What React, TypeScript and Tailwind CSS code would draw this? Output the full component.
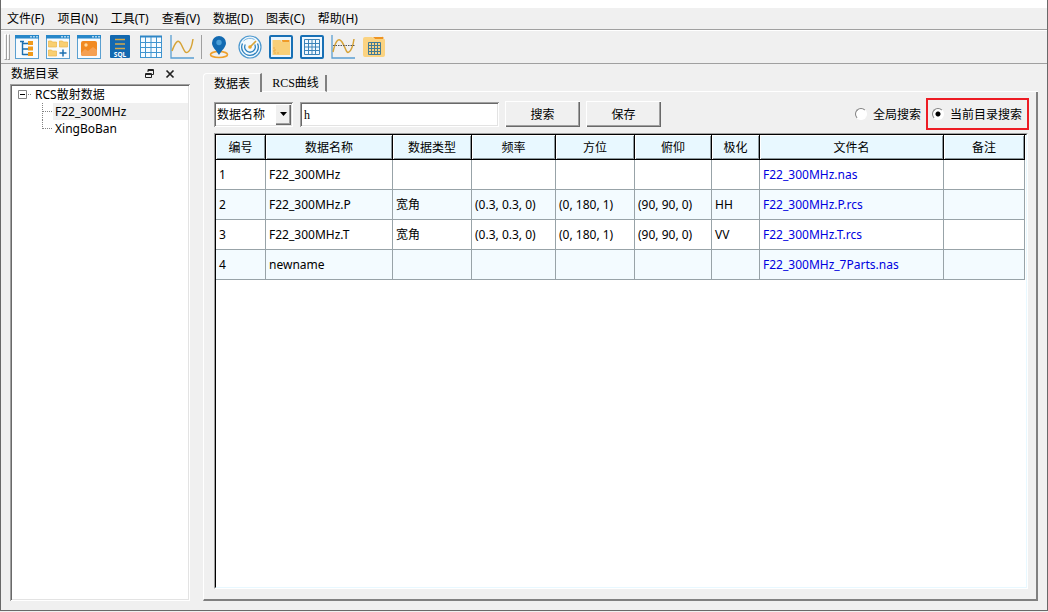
import { useState } from "react";
import type { ReactNode } from "react";

const sunken =
  "shadow-[inset_1px_1px_#a0a0a0,inset_-1px_-1px_#ffffff,inset_2px_2px_#696969,inset_-2px_-2px_#e3e3e3]";
const raised =
  "shadow-[inset_1px_1px_#ffffff,inset_-1px_-1px_#696969,inset_-2px_-2px_#a0a0a0]";
const bitmapFont = "font-['Liberation_Serif','Noto_Sans_CJK_SC',serif]";

const menus = ["文件(F)", "项目(N)", "工具(T)", "查看(V)", "数据(D)", "图表(C)", "帮助(H)"];

const columns = [
  { label: "编号", width: "w-[50px]" },
  { label: "数据名称", width: "w-[127px]" },
  { label: "数据类型", width: "w-[79px]" },
  { label: "频率", width: "w-[84px]" },
  { label: "方位", width: "w-[79px]" },
  { label: "俯仰", width: "w-[77px]" },
  { label: "极化", width: "w-[48px]" },
  { label: "文件名", width: "w-auto" },
  { label: "备注", width: "w-[81px]" },
];

const rows = [
  ["1", "F22_300MHz", "", "", "", "", "", "F22_300MHz.nas", ""],
  ["2", "F22_300MHz.P", "宽角", "(0.3, 0.3, 0)", "(0, 180, 1)", "(90, 90, 0)", "HH", "F22_300MHz.P.rcs", ""],
  ["3", "F22_300MHz.T", "宽角", "(0.3, 0.3, 0)", "(0, 180, 1)", "(90, 90, 0)", "VV", "F22_300MHz.T.rcs", ""],
  ["4", "newname", "", "", "", "", "", "F22_300MHz_7Parts.nas", ""],
];

function WindowFrame() {
  return (
    <>
      <rect x="0.5" y="0.5" width="23" height="23" fill="#f7fbfe" stroke="#5ba0d0" />
      <rect width="24" height="3.5" fill="#2787c9" />
      <rect x="15" y="1" width="2" height="1.5" fill="#a9d3ef" />
      <rect x="18" y="1" width="2" height="1.5" fill="#a9d3ef" />
      <rect x="21" y="1" width="2" height="1.5" fill="#a9d3ef" />
    </>
  );
}

function TreeIcon() {
  return (
    <>
      <WindowFrame />
      <path d="M5 6.5h4M7.5 6.5V20M7.5 8.500H13M7.5 14H13M7.5 19.500H13" stroke="#1b6fb0" strokeWidth="1.4" fill="none" />
      <rect x="13" y="6" width="5" height="4" fill="#f09a1a" />
      <rect x="13" y="11.5" width="5" height="4" fill="#f09a1a" />
      <rect x="13" y="17" width="5" height="4" fill="#f09a1a" />
    </>
  );
}

function AddFoldersIcon() {
  return (
    <>
      <WindowFrame />
      <path
        d="M2.500 6h3l1 1h4v5h-8zM13.500 6h3l1 1h4v5h-8zM2.500 15h3l1 1h4v5h-8z"
        fill="#f8cf72"
        stroke="#edb548"
        strokeWidth="0.7"
      />
      <path d="M17 14.500v7M13.500 18h7" stroke="#1b6fb0" strokeWidth="1.5" />
    </>
  );
}

function PictureIcon() {
  return (
    <>
      <WindowFrame />
      <rect x="4" y="6" width="16" height="15" rx="2" fill="#f18a22" />
      <circle cx="9" cy="10" r="1.7" fill="#ffd9a0" />
      <path d="M4 18l4-4 3 2 5-4 4 3v4a2 2 0 0 1-2 2H6a2 2 0 0 1-2-2z" fill="#f5a052" />
    </>
  );
}

function SqlIcon() {
  return (
    <>
      <rect x="2" width="20" height="23" rx="1" fill="#1369b0" />
      <path d="M7 4.5h10M7 9h10M7 13.5h10" stroke="#d3a94b" strokeWidth="1.4" />
      <text x="12" y="21.500" fontSize="6.500" fontWeight="700" textAnchor="middle" fill="#ffffff">
        SQL
      </text>
    </>
  );
}

function GridIcon() {
  return (
    <>
      <rect x="1.500" y="1.500" width="21" height="21" fill="#f6fbff" stroke="#3f94cf" />
      <path d="M1 1.500h22" stroke="#2f86c6" strokeWidth="2" />
      <path d="M1 7.500h22M1 12.500h22M1 17.500h22M6.500 2v20M12 2v20M17.500 2v20" stroke="#3f94cf" />
    </>
  );
}

function CurveIcon() {
  return (
    <>
      <path d="M1 0v23h23" stroke="#5a9fd2" strokeWidth="1.3" fill="none" />
      <path d="M2 16C5 8 8 3 11 9s4 10 7 8 4-6 5-13" stroke="#d6a337" strokeWidth="1.5" fill="none" />
    </>
  );
}

function PinIcon() {
  return (
    <>
      <ellipse cx="12" cy="19.500" rx="8.500" ry="3" stroke="#efa02b" strokeWidth="1.600" fill="#f0f0f0" />
      <path d="M12 20C9 15 5 12 5 8a7 7 0 0 1 14 0C19 12 15 15 12 20z" fill="#136ab1" />
      <circle cx="12" cy="7.500" r="2.700" fill="#4b9fd8" />
    </>
  );
}

function RadarIcon() {
  return (
    <>
      <circle cx="12" cy="12" r="11" stroke="#4c98cf" strokeWidth="1.2" fill="#f3f9fd" />
      <path d="M4.500 8.500a8.300 8.300 0 1 0 15 0" stroke="#2c80bd" strokeWidth="1.3" fill="none" />
      <path d="M7.300 9.500a5.300 5.300 0 1 0 9.400 0" stroke="#2c80bd" strokeWidth="1.3" fill="none" />
      <path d="M5.500 6a9 9 0 0 1 11-1.500" stroke="#7ab4dd" fill="none" />
      <path d="M12 12l6-6" stroke="#d6a337" strokeWidth="1.600" />
      <circle cx="12" cy="12" r="1.800" fill="#e9a42c" />
    </>
  );
}

function FolderIcon() {
  return (
    <>
      <rect x="1" y="1" width="22" height="22" rx="1" fill="#eaf5fd" stroke="#1870b5" strokeWidth="2" />
      <path d="M3.500 5h8l1.500 2h8v13H3.500z" fill="#f8cf78" />
      <path d="M12.500 5h8v2h-7z" fill="#ef9b28" />
      <path d="M5 12v6h5M5 15h3" stroke="#efac49" strokeDasharray="2 1" fill="none" />
    </>
  );
}

function TableIcon() {
  return (
    <>
      <rect x="1" y="1" width="22" height="22" rx="1" fill="#eff8ff" stroke="#1870b5" strokeWidth="2" />
      <path
        d="M4.500 4.500h15v15h-15zM8.500 4.500v15M12 4.500v15M15.500 4.500v15M4.500 8.500h15M4.500 12h15M4.500 15.500h15"
        stroke="#3a83b9"
        fill="none"
      />
    </>
  );
}

function CurveThresholdIcon() {
  return (
    <>
      <path d="M1 0v23h23" stroke="#5a9fd2" strokeWidth="1.3" fill="none" />
      <path d="M2 17C4 8 7 1 11 7s4 12 7 10 4-6 5-13" stroke="#d6a337" strokeWidth="1.5" fill="none" />
      <path d="M2 10.500h22" stroke="#555555" strokeDasharray="1.500 1" />
    </>
  );
}

function FolderTableIcon() {
  return (
    <>
      <path d="M1 4a2 2 0 0 1 2-2h7l3 2h9a1 1 0 0 1 1 1v15a2 2 0 0 1-2 2H3a2 2 0 0 1-2-2z" fill="#fbd381" />
      <path d="M11 2h9a1 1 0 0 1 1 2h-8z" fill="#ef9421" />
      <path
        d="M6.500 7.500h12v12h-12zM9.500 7.500v12M12.500 7.500v12M15.500 7.500v12M6.500 10.500h12M6.500 13.500h12M6.500 16.500h12"
        stroke="#427a94"
        fill="none"
      />
    </>
  );
}

const toolGroups: { label: string; icon: ReactNode }[][] = [
  [
    { label: "目录树", icon: <TreeIcon /> },
    { label: "新建", icon: <AddFoldersIcon /> },
    { label: "图片", icon: <PictureIcon /> },
    { label: "SQL", icon: <SqlIcon /> },
    { label: "表格", icon: <GridIcon /> },
    { label: "曲线", icon: <CurveIcon /> },
  ],
  [
    { label: "定位", icon: <PinIcon /> },
    { label: "雷达", icon: <RadarIcon /> },
    { label: "打开目录", icon: <FolderIcon /> },
    { label: "数据表", icon: <TableIcon /> },
    { label: "阈值曲线", icon: <CurveThresholdIcon /> },
    { label: "表格目录", icon: <FolderTableIcon /> },
  ],
];

const gripBar = "w-[3px] border-t border-r border-b border-l border-t-white border-r-[#a0a0a0] border-b-[#a0a0a0] border-l-white";

function Toolbar() {
  return (
    <div className="flex h-[34px] items-center border-b border-[#a0a0a0] border-t border-t-white pl-[3px]">
      <div className="mr-[5px] flex h-[26px]">
        <div className={gripBar} />
        <div className={gripBar} />
      </div>
      {toolGroups.map((group, i) => (
        <div key={i} className={`flex gap-[7px] ${i > 0 ? "ml-[7px] border-l border-[#a0a0a0] pl-[5px]" : ""}`}>
          {group.map((tool) => (
            <button key={tool.label} type="button" aria-label={tool.label} className="h-6 w-6">
              <svg viewBox="0 0 24 24" className="h-6 w-6">
                {tool.icon}
              </svg>
            </button>
          ))}
        </div>
      ))}
    </div>
  );
}

function Sidebar() {
  return (
    <aside className="flex w-[180px] shrink-0 flex-col">
      <div className="flex h-5 items-center">
        <h2 className="flex-1 pl-px">数据目录</h2>
        <button type="button" aria-label="浮动" className="mr-[10px]">
          <svg viewBox="0 0 10 10" className="h-[10px] w-[10px]" fill="none" stroke="#222222">
            <path d="M3 3V.5h5.500v5H7M3 1.500h6" />
            <path d="M.5 4.500h6v4h-6zM.5 5.500h6" />
          </svg>
        </button>
        <button type="button" aria-label="关闭" className="mr-[15px]">
          <svg viewBox="0 0 10 10" className="h-[10px] w-[10px]" fill="none" stroke="#222222" strokeWidth="1.700">
            <path d="M1.500 1.500l7 7M8.500 1.500l-7 7" />
          </svg>
        </button>
      </div>
      <div className={`flex-1 bg-white p-[2px] ${sunken}`}>
        <div className="flex h-[17px] items-center">
          <button type="button" aria-label="折叠" className="mr-[3px] ml-[6px]">
            <svg viewBox="0 0 14 9" className="h-[9px] w-[14px]" fill="none">
              <path d="M.5.5h8v8h-8z" stroke="#848484" />
              <path d="M2 4.500h5" stroke="#000000" />
              <path d="M10 4.500h4" stroke="#848484" strokeDasharray="1 1" />
            </svg>
          </button>
          <span>RCS散射数据</span>
        </div>
        <ul className="ml-[30px]">
          {["F22_300MHz", "XingBoBan"].map((name, i) => (
            <li key={name} className="flex h-[17px]">
              <svg viewBox="0 0 11 17" className="h-[17px] w-[11px]" stroke="#848484" strokeDasharray="1 1">
                <path d={i === 0 ? "M.5 0v17M1 8.500h10" : "M.5 0v9M1 8.500h10"} fill="none" />
              </svg>
              <button
                type="button"
                className={`flex-1 pl-[2px] text-left leading-[17px] ${i === 0 ? "bg-[#f0f0f0]" : ""}`}
              >
                {name}
              </button>
            </li>
          ))}
        </ul>
      </div>
    </aside>
  );
}

function Radio({ label, checked, onChange }: { label: string; checked: boolean; onChange: () => void }) {
  return (
    <label className={`flex items-center gap-[6px] ${bitmapFont}`}>
      <input
        type="radio"
        name="scope"
        checked={checked}
        onChange={onChange}
        className="h-3 w-3 appearance-none rounded-full border border-t-[#808080] border-r-white border-b-white border-l-[#808080] bg-white checked:bg-[radial-gradient(circle,#000000_0_2px,#ffffff_3px)]"
      />
      <span className="pt-[2px]">{label}</span>
    </label>
  );
}

function SearchBar() {
  const [query, setQuery] = useState("h");
  const [scope, setScope] = useState("current");

  return (
    <div className={`flex h-8 items-center ${bitmapFont}`}>
      <div className="relative mr-[7px]">
        <select
          aria-label="搜索字段"
          className={`block h-[25px] w-[79px] appearance-none bg-white pt-[2px] pl-[3px] outline-none ${sunken}`}
        >
          <option>数据名称</option>
          <option>数据类型</option>
          <option>文件名</option>
        </select>
        {/* Drop-down arrow over the select */}
        <span
          className={`pointer-events-none absolute top-[2px] right-[2px] flex h-[21px] w-4 items-center justify-center bg-[#f0f0f0] ${raised}`}
        >
          <svg viewBox="0 0 7 4" className="h-1 w-[7px]">
            <path d="M0 0h7L3.500 4z" />
          </svg>
        </span>
      </div>
      <input
        type="text"
        aria-label="搜索内容"
        value={query}
        onChange={(e) => setQuery(e.target.value)}
        className={`h-[25px] w-[199px] bg-white px-1 pt-[2px] outline-none ${sunken}`}
      />
      <button type="button" className={`ml-[6px] h-[26px] w-[75px] bg-[#f0f0f0] pt-[2px] ${raised}`}>
        搜索
      </button>
      <button type="button" className={`ml-[6px] h-[26px] w-[75px] bg-[#f0f0f0] pt-[2px] ${raised}`}>
        保存
      </button>
      <div className="ml-auto flex items-center gap-[5px]">
        <Radio label="全局搜索" checked={scope === "global"} onChange={() => setScope("global")} />
        <div className="flex h-8 items-center border-2 border-[#ed1c24] pr-[5px] pl-[4px]">
          <Radio label="当前目录搜索" checked={scope === "current"} onChange={() => setScope("current")} />
        </div>
      </div>
    </div>
  );
}

function DataTable() {
  return (
    <div className="mr-px flex-1 border border-t-[#a0a0a0] border-r-white border-b-white border-l-[#a0a0a0] bg-white">
      <div className="h-full border border-t-black border-r-[#e8f8ff] border-b-[#e8f8ff] border-l-black pr-px">
        <table className="w-full table-fixed border-separate border-spacing-0">
          <thead>
            <tr>
              {columns.map((col) => (
                <th
                  key={col.label}
                  className={`h-[25px] border-r border-b border-black bg-[#e8f8ff] p-0 pt-px font-normal shadow-[inset_1px_1px_#ffffff,inset_-1px_-1px_#8c979c] ${col.width}`}
                >
                  {col.label}
                </th>
              ))}
            </tr>
          </thead>
          <tbody>
            {rows.map((row, r) => (
              <tr key={row[0]} className={r % 2 ? "bg-[#f3fbff]" : "bg-white"}>
                {row.map((cell, c) => (
                  <td key={c} className="h-[30px] border-r border-b border-[#98a3a8] p-0 pl-[3px] whitespace-nowrap">
                    {c === 7 ? (
                      <a href="#" className="text-[#0000e0]">
                        {cell}
                      </a>
                    ) : (
                      cell
                    )}
                  </td>
                ))}
              </tr>
            ))}
          </tbody>
        </table>
      </div>
    </div>
  );
}

export default function App() {
  return (
    <div className="flex h-screen flex-col bg-[#f0f0f0] pb-px font-['Noto_Sans','Noto_Sans_CJK_SC',sans-serif] text-[12px] leading-4 text-black">
      <div className="flex flex-1 flex-col border-r border-b border-l border-[#696969]">
        <div className="h-2 bg-white" />
        <nav className="flex h-[22px] items-center gap-[13px] border-b border-[#a0a0a0] pl-[6px]">
          {menus.map((menu) => (
            <button key={menu} type="button">
              {menu}
            </button>
          ))}
        </nav>
        <Toolbar />
        <main className="flex flex-1 gap-[13px] pr-[9px] pb-[9px] pl-[9px]">
          <Sidebar />
          <section className="flex flex-1 flex-col pt-[9px]">
            <div role="tablist" className="flex items-end">
              <button
                type="button"
                role="tab"
                aria-selected="true"
                className="h-[19px] w-[59px] rounded-tl border-t border-r-2 border-l border-t-white border-r-[#808080] border-l-white pt-px"
              >
                数据表
              </button>
              <button
                type="button"
                role="tab"
                aria-selected="false"
                className={`h-[17px] w-[65px] border-r-2 border-b border-r-[#808080] border-b-white pl-1 ${bitmapFont}`}
              >
                RCS曲线
              </button>
              <div className="flex-1 border-b border-white" />
            </div>
            <div className="flex flex-1 flex-col gap-[3px] border-r-2 border-b-2 border-l border-r-[#808080] border-b-[#808080] border-l-white pt-[6px] pr-[7px] pb-[10px] pl-[10px]">
              <SearchBar />
              <DataTable />
            </div>
          </section>
        </main>
      </div>
    </div>
  );
}
